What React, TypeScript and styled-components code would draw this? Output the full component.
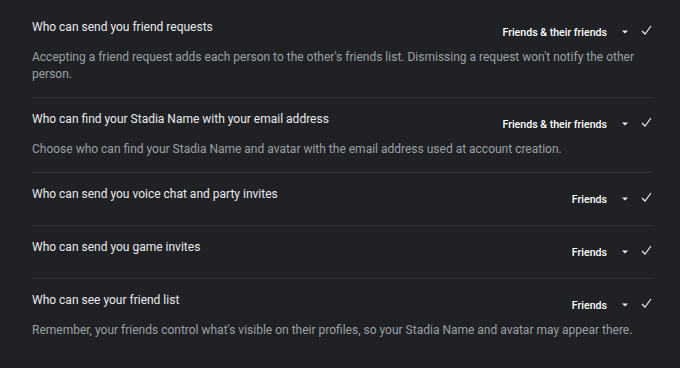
import styled, { createGlobalStyle } from "styled-components";

const GlobalStyle = createGlobalStyle`
  html, body {
    margin: 0;
    padding: 0;
    background: #202124;
  }
  body {
    font-family: Roboto, "Liberation Sans", sans-serif;
  }
`;

interface Setting {
  title: string;
  value: string;
  description?: string;
}

const settings: Setting[] = [
  {
    title: "Who can send you friend requests",
    value: "Friends & their friends",
    description:
      "Accepting a friend request adds each person to the other's friends list. Dismissing a request won't notify the other person.",
  },
  {
    title: "Who can find your Stadia Name with your email address",
    value: "Friends & their friends",
    description:
      "Choose who can find your Stadia Name and avatar with the email address used at account creation.",
  },
  { title: "Who can send you voice chat and party invites", value: "Friends" },
  { title: "Who can send you game invites", value: "Friends" },
  {
    title: "Who can see your friend list",
    value: "Friends",
    description:
      "Remember, your friends control what's visible on their profiles, so your Stadia Name and avatar may appear there.",
  },
];

const Page = styled.div`
  width: 680px;
  height: 368px;
  box-sizing: border-box;
  padding: 6px 28px 0 32px;
  background: #202124;
  overflow: hidden;
`;

const Row = styled.section`
  padding: 13px 0 14px;
  border-bottom: 1px solid #303134;

  &:last-child {
    border-bottom: none;
  }
`;

const Header = styled.div`
  display: flex;
  justify-content: space-between;
  align-items: flex-start;
`;

const Title = styled.h3`
  margin: 0;
  font-size: 12px;
  line-height: 16px;
  font-weight: 400;
  color: #e8eaed;
`;

const Select = styled.div`
  display: flex;
  align-items: center;
  height: 24px;
  margin-top: 1px;
  color: #ffffff;
  font-size: 10.6px;
  font-weight: 500;
`;

const Value = styled.span`
  margin-right: 14px;
`;

const Description = styled.p`
  margin: 5px 0 0;
  max-width: 602px;
  font-size: 12px;
  line-height: 17px;
  color: #9aa0a6;
`;

function Caret() {
  return (
    <svg width="8" height="8" viewBox="0 0 8 8" style={{ marginRight: 12 }}>
      <path d="M1 2.5h6L4 5.5z" fill="#e8eaed" />
    </svg>
  );
}

function Check() {
  return (
    <svg width="11" height="11" viewBox="0 0 11 11" style={{ marginBottom: 3 }}>
      <path
        d="M1 6l3 3 6-8"
        fill="none"
        stroke="#e8eaed"
        strokeWidth="1.2"
      />
    </svg>
  );
}

export default function App() {
  return (
    <>
      <GlobalStyle />
      <Page>
        {settings.map((s) => (
          <Row key={s.title}>
            <Header>
              <Title>{s.title}</Title>
              <Select>
                <Value>{s.value}</Value>
                <Caret />
                <Check />
              </Select>
            </Header>
            {s.description && <Description>{s.description}</Description>}
          </Row>
        ))}
      </Page>
    </>
  );
}
